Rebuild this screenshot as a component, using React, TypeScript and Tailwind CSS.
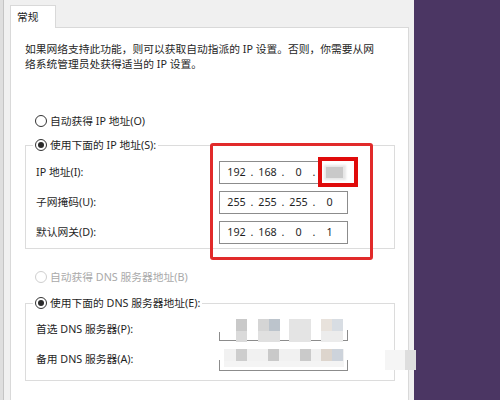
import { Fragment, type ReactNode } from 'react'

type Block = { x: number; y: number; w: number; h: number; c: string }

// Pixelated cover over the DNS values (offsets are relative to the field box).
const preferredDnsMosaic: Block[] = [
  { x: 16, y: 0, w: 11, h: 12, c: '#c9c9c9' },
  { x: 16, y: 12, w: 11, h: 11, c: '#dadada' },
  { x: 38, y: 0, w: 11, h: 12, c: '#d5d5d5' },
  { x: 49, y: 0, w: 11, h: 12, c: '#bcc4cc' },
  { x: 38, y: 12, w: 22, h: 11, c: '#e0e0e0' },
  { x: 69, y: 0, w: 22, h: 23, c: '#e4e4e4' },
  { x: 101, y: 0, w: 11, h: 12, c: '#e8e2dc' },
  { x: 112, y: 0, w: 11, h: 12, c: '#d8dde3' },
  { x: 101, y: 12, w: 22, h: 11, c: '#ececec' },
]

const alternateDnsMosaic: Block[] = [
  { x: 4, y: 0, w: 120, h: 12, c: '#f1f1f1' },
  { x: 16, y: 0, w: 11, h: 12, c: '#cdcdcd' },
  { x: 48, y: 0, w: 11, h: 12, c: '#c9c9c9' },
  { x: 80, y: 0, w: 11, h: 12, c: '#cacaca' },
  { x: 101, y: 0, w: 11, h: 12, c: '#ddd5cd' },
  { x: 112, y: 0, w: 11, h: 12, c: '#cdd3db' },
  { x: 4, y: 12, w: 120, h: 6, c: '#f4f4f4' },
]

export default function App() {
  return (
    <div className="relative flex h-[400px] w-[500px] overflow-hidden font-['Noto_Sans','Noto_Sans_CJK_SC',sans-serif] text-[10.75px] text-[#1f1f1f]">
      <div className="flex w-[414px] shrink-0 bg-[#f0f0f0]">
        <div className="w-[4px] shrink-0 border-r border-[#c4c4c4] bg-[#dedede]" />

        <div className="ml-[6px] flex w-[399px] flex-col pt-[5px]">
          <div className="relative z-10 -mb-px flex h-[23px] w-[46px] shrink-0 items-center border border-b-0 border-[#d9d9d9] bg-white pl-[6px] leading-none">
            常规
          </div>

          <div className="h-[400px] shrink-0 border border-[#d9d9d9] bg-white pl-[14px] pt-[14px]">
            <p className="whitespace-nowrap leading-[15px] text-[#262626]">
              如果网络支持此功能，则可以获取自动指派的 IP 设置。否则，你需要从网
              <br />
              络系统管理员处获得适当的 IP 设置。
            </p>

            <div className="ml-[10px] mt-[41px]">
              <Radio label="自动获得 IP 地址(O)" />
            </div>

            <Group className="mt-[8px]" legend={<Radio checked label="使用下面的 IP 地址(S):" />}>
              <div className="flex flex-col gap-[7px] pb-[4px] pt-[8px]">
                <Row label="IP 地址(I):">
                  <IpField octets={['192', '168', '0', '']} />
                </Row>
                <Row label="子网掩码(U):">
                  <IpField octets={['255', '255', '255', '0']} />
                </Row>
                <Row label="默认网关(D):">
                  <IpField octets={['192', '168', '0', '1']} />
                </Row>
              </div>
            </Group>

            <div className="ml-[10px] mt-[20px]">
              <Radio disabled label="自动获得 DNS 服务器地址(B)" />
            </div>

            <Group className="mt-[10px]" legend={<Radio checked label="使用下面的 DNS 服务器地址(E):" />}>
              <div className="flex flex-col gap-[7px] pb-[9px] pt-[7px]">
                <Row label="首选 DNS 服务器(P):">
                  <MaskedField blocks={preferredDnsMosaic} erased />
                </Row>
                <Row label="备用 DNS 服务器(A):">
                  <MaskedField blocks={alternateDnsMosaic} />
                </Row>
              </div>
            </Group>
          </div>
        </div>
      </div>

      <div className="flex-1 bg-[#4b3663]" />

      {/* annotation boxes drawn over the dialog */}
      <div className="absolute left-[210px] top-[143px] h-[117px] w-[163px] rounded-[3px] border-[3px] border-[#e12a2a]" />
      <div className="absolute left-[318px] top-[157px] h-[30px] w-[40px] border-[4px] border-[#e00b0b] bg-white">
        <div className="absolute left-[2px] top-[4px] h-[15px] w-[22px] bg-[#e6e6e6] blur-[1px]" />
        <div className="absolute left-[4px] top-[6px] h-[11px] w-[17px] bg-[#c9c9c9] blur-[0.5px]" />
      </div>

      {/* faint watermark chip at the window edge */}
      <div className="absolute left-[385px] top-[350px] flex h-[20px] w-[31px] blur-[0.5px]">
        <div className="w-[20px] bg-[#f5f5f5]" />
        <div className="flex-1 bg-[#dedede]" />
      </div>
    </div>
  )
}

function Radio({ label, checked, disabled }: { label: string; checked?: boolean; disabled?: boolean }) {
  return (
    <span className="flex h-[16px] items-center gap-[3px] whitespace-nowrap leading-none">
      <span
        className={
          disabled
            ? 'flex h-[12px] w-[12px] items-center justify-center rounded-full border border-[#cfcfcf] bg-white'
            : 'flex h-[12px] w-[12px] items-center justify-center rounded-full border border-[#333333] bg-white'
        }
      >
        {checked && <span className="h-[6px] w-[6px] rounded-full bg-[#2b2b2b]" />}
      </span>
      <span className={disabled ? 'text-[#a9a9a9]' : 'text-[#1f1f1f]'}>{label}</span>
    </span>
  )
}

function Group({ legend, className, children }: { legend: ReactNode; className: string; children: ReactNode }) {
  return (
    <fieldset className={`w-[370px] border border-[#dcdcdc] ${className}`}>
      <legend className="ml-[7px] px-[2px]">{legend}</legend>
      <div className="pl-[10px]">{children}</div>
    </fieldset>
  )
}

function Row({ label, children }: { label: string; children: ReactNode }) {
  return (
    <div className="flex items-center">
      <span className="w-[183px] whitespace-nowrap leading-none">{label}</span>
      {children}
    </div>
  )
}

function IpField({ octets }: { octets: string[] }) {
  return (
    <div className="flex h-[23px] w-[129px] items-center border border-[#8c8c8c] bg-white pl-[3px] leading-none">
      {octets.map((octet, i) => (
        <Fragment key={i}>
          <span className="w-[27px] text-center">{octet}</span>
          {i < 3 && <span className="w-[4px] text-center">.</span>}
        </Fragment>
      ))}
    </div>
  )
}

function MaskedField({ blocks, erased }: { blocks: Block[]; erased?: boolean }) {
  return (
    <div className="relative h-[23px] w-[129px] border border-[#8c8c8c] bg-white">
      <div className="absolute -left-px -top-px h-[12px] w-[131px] bg-white" />
      {erased && <div className="absolute -left-[2px] -top-px h-[14px] w-[18px] rounded-br-[8px] bg-white" />}
      <div className="absolute inset-0 blur-[0.6px]">
        {blocks.map((b, i) => (
          <div
            key={i}
            className="absolute"
            style={{ left: b.x, top: b.y, width: b.w, height: b.h, background: b.c }}
          />
        ))}
      </div>
    </div>
  )
}
